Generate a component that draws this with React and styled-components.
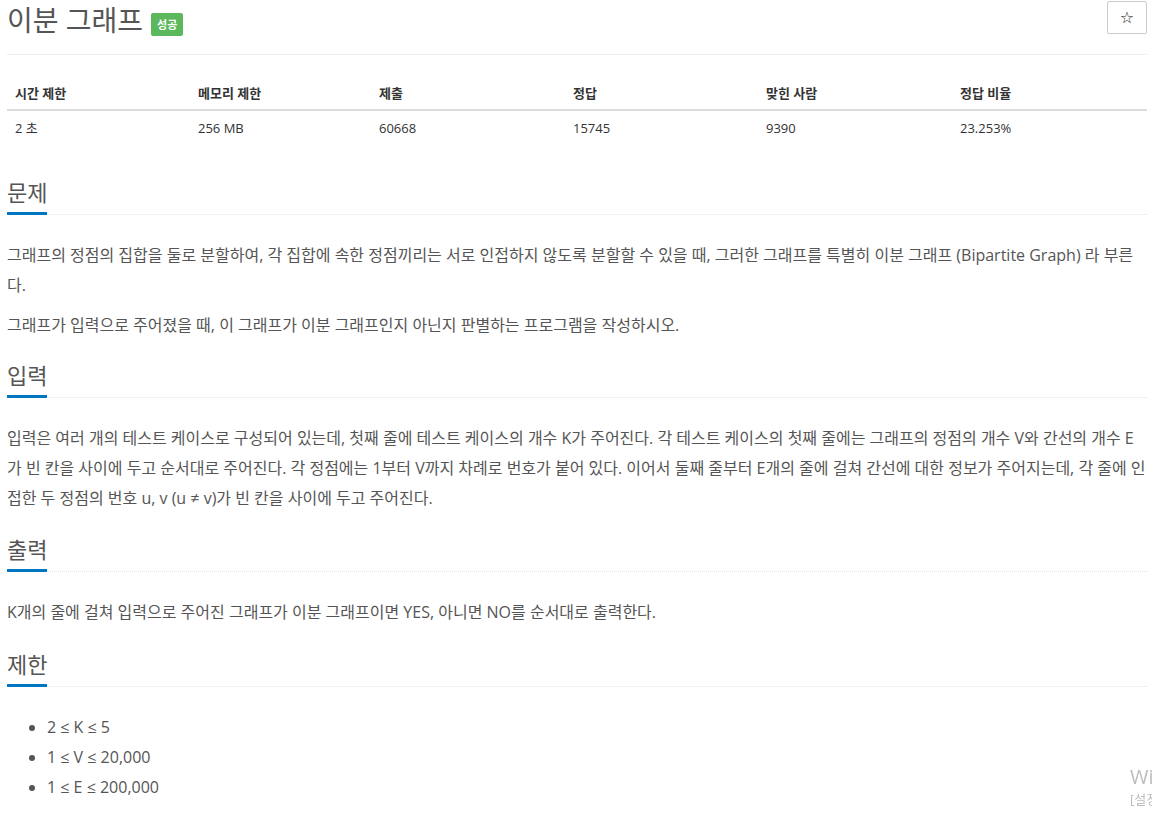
import React from "react";
import styled, { createGlobalStyle } from "styled-components";

const GlobalStyle = createGlobalStyle`
  html, body {
    margin: 0;
    padding: 0;
    background: #fff;
    overflow: hidden;
  }
  body {
    font-family: "Open Sans", "Noto Sans CJK KR", sans-serif;
    color: #555;
  }
  * {
    box-sizing: border-box;
  }
`;

const Page = styled.div`
  width: 1140px;
  margin-left: 7px;
`;

const Header = styled.div`
  display: flex;
  align-items: flex-start;
  padding-bottom: 14px;
  border-bottom: 1px solid #eee;
`;

const Title = styled.h1`
  margin: 0;
  font-size: 28px;
  font-weight: 400;
  line-height: 40px;
  color: #555;
`;

const Badge = styled.span`
  margin: 13px 0 0 8px;
  height: 23px;
  padding: 0 6px;
  background: #5cb85c;
  color: #fff;
  font-size: 11px;
  font-weight: 700;
  line-height: 23px;
  border-radius: 2px;
`;

const StarButton = styled.button`
  margin: 1px 0 0 auto;
  width: 40px;
  height: 33px;
  padding: 0;
  border: 1px solid #ccc;
  border-radius: 2px;
  background: #fff;
  color: #222;
  font-family: "DejaVu Sans", sans-serif;
  font-size: 16px;
  line-height: 30px;
  cursor: pointer;
`;

const Table = styled.table`
  width: 100%;
  table-layout: fixed;
  border-collapse: collapse;
  margin-top: 20px;
  font-size: 13px;
  color: #333;
`;

const Th = styled.th`
  width: ${(p) => p.$w}px;
  padding: 9px 8px 7px;
  text-align: left;
  font-size: 13px;
  font-weight: 700;
  line-height: 18px;
  border-bottom: 2px solid #ddd;
`;

const Td = styled.td`
  padding: 8px;
  line-height: 18px;
`;

const Section = styled.section`
  padding-top: ${(p) => p.$gap}px;
`;

const Headline = styled.div`
  border-bottom: 1px dotted #dfe4ea;
  margin-bottom: 25px;
`;

const HeadTitle = styled.h2`
  display: inline-block;
  margin: 0 0 -1px;
  padding-bottom: 9px;
  font-size: 22px;
  font-weight: 400;
  line-height: 22px;
  color: #555;
  border-bottom: 3px solid #0076c0;
`;

const Text = styled.p`
  margin: 0;
  font-size: 16px;
  line-height: 30px;

  & + & {
    margin-top: 10px;
  }
`;

const Limits = styled.ul`
  margin: 0;
  padding-left: 40px;
  font-size: 16px;
  line-height: 30px;
`;

const Watermark = styled.div`
  position: fixed;
  left: 1130px;
  top: 764px;
  white-space: nowrap;
  color: #bdbdbd;
  pointer-events: none;
`;

const WatermarkTitle = styled.div`
  font-size: 20px;
  line-height: 26px;
`;

const WatermarkNote = styled.div`
  font-size: 13px;
  line-height: 18px;
`;

const columns = [
  { label: "시간 제한", value: "2 초", w: 183 },
  { label: "메모리 제한", value: "256 MB", w: 181 },
  { label: "제출", value: "60668", w: 194 },
  { label: "정답", value: "15745", w: 193 },
  { label: "맞힌 사람", value: "9390", w: 194 },
  { label: "정답 비율", value: "23.253%", w: 195 },
];

const sections = [
  {
    title: "문제",
    gap: 36,
    paragraphs: [
      "그래프의 정점의 집합을 둘로 분할하여, 각 집합에 속한 정점끼리는 서로 인접하지 않도록 분할할 수 있을 때, 그러한 그래프를 특별히 이분 그래프 (Bipartite Graph) 라 부른다.",
      "그래프가 입력으로 주어졌을 때, 이 그래프가 이분 그래프인지 아닌지 판별하는 프로그램을 작성하시오.",
    ],
  },
  {
    title: "입력",
    gap: 24,
    paragraphs: [
      "입력은 여러 개의 테스트 케이스로 구성되어 있는데, 첫째 줄에 테스트 케이스의 개수 K가 주어진다. 각 테스트 케이스의 첫째 줄에는 그래프의 정점의 개수 V와 간선의 개수 E가 빈 칸을 사이에 두고 순서대로 주어진다. 각 정점에는 1부터 V까지 차례로 번호가 붙어 있다. 이어서 둘째 줄부터 E개의 줄에 걸쳐 간선에 대한 정보가 주어지는데, 각 줄에 인접한 두 정점의 번호 u, v (u ≠ v)가 빈 칸을 사이에 두고 주어진다.",
    ],
  },
  {
    title: "출력",
    gap: 25,
    paragraphs: [
      "K개의 줄에 걸쳐 입력으로 주어진 그래프가 이분 그래프이면 YES, 아니면 NO를 순서대로 출력한다.",
    ],
  },
];

const limits = ["2 ≤ K ≤ 5", "1 ≤ V ≤ 20,000", "1 ≤ E ≤ 200,000"];

const App = () => {
  return (
    <>
      <GlobalStyle />
      <Page>
        <Header>
          <Title>이분 그래프</Title>
          <Badge>성공</Badge>
          <StarButton type="button">☆</StarButton>
        </Header>

        <Table>
          <thead>
            <tr>
              {columns.map((c) => (
                <Th key={c.label} $w={c.w}>
                  {c.label}
                </Th>
              ))}
            </tr>
          </thead>
          <tbody>
            <tr>
              {columns.map((c) => (
                <Td key={c.label}>{c.value}</Td>
              ))}
            </tr>
          </tbody>
        </Table>

        {sections.map((s) => (
          <Section key={s.title} $gap={s.gap}>
            <Headline>
              <HeadTitle>{s.title}</HeadTitle>
            </Headline>
            {s.paragraphs.map((p, j) => (
              <Text key={j}>{p}</Text>
            ))}
          </Section>
        ))}

        <Section $gap={26}>
          <Headline>
            <HeadTitle>제한</HeadTitle>
          </Headline>
          <Limits>
            {limits.map((l) => (
              <li key={l}>{l}</li>
            ))}
          </Limits>
        </Section>
      </Page>

      <Watermark>
        <WatermarkTitle>Windows 정품 인증</WatermarkTitle>
        <WatermarkNote>[설정]으로 이동하여 Windows를 정품 인증합니다.</WatermarkNote>
      </Watermark>
    </>
  );
};

export default App;
